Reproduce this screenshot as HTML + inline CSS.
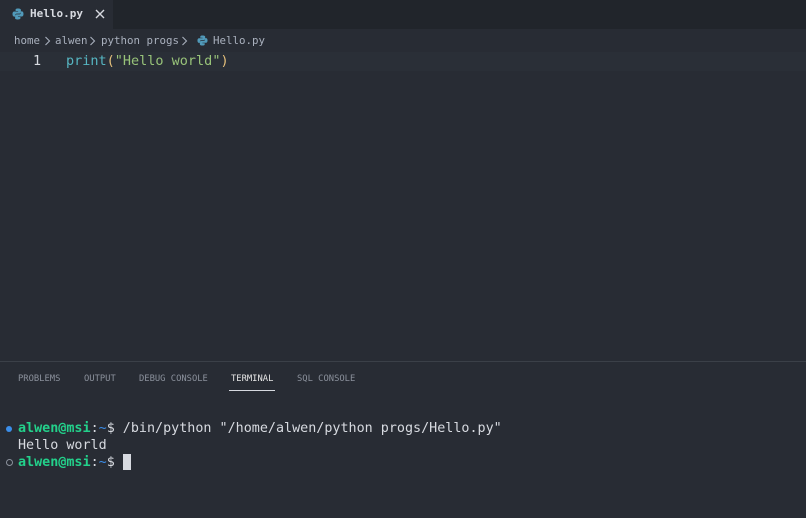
<!DOCTYPE html>
<html><head><style>
body{margin:0;width:806px;height:517px;background:#282c34;overflow:hidden;font-family:"DejaVu Sans Mono","Liberation Mono",monospace;position:relative}
.tabbar{position:absolute;left:0;top:0;width:806px;height:29px;background:#21252b}
.tab{position:absolute;left:0;top:0;width:113px;height:29px;background:#282c34;color:#d7dae0;font-size:11px}
.abs{position:absolute;white-space:pre}
.bc{font-size:10.8px;color:#a9b0bd;top:34px}
.panel{position:absolute;left:0;top:361px;width:806px;height:156px;border-top:1px solid #3b4048;background:#282c34}
.pt{font-size:8.8px;color:#8b919c;top:374px}
.term{font-size:13.4px;color:#d7dae0}
.g{color:#23d18b;font-weight:bold}
.b{color:#3b8eea}
</style></head><body>
<div class="tabbar"></div>
<div class="tab">
<svg class="abs" style="left:12px;top:8px" width="12" height="12" viewBox="0 0 12 12"><path d="M6 0.5C3.5 0.5 3.6 1.6 3.6 1.6V3H6.1V3.5H2.4S0.5 3.3 0.5 6s1.7 2.6 1.7 2.6H3.2V7.3S3.1 5.6 4.8 5.6H7.3S8.9 5.6 8.9 4V1.9S9.2 0.5 6 0.5Z" fill="#519aba"/><path d="M6 11.5c2.5 0 2.4-1.1 2.4-1.1V9H5.9V8.5h3.7S11.5 8.7 11.5 6s-1.7-2.6-1.7-2.6H8.8v1.3S8.9 6.4 7.2 6.4H4.7S3.1 6.4 3.1 8v2.1S2.8 11.5 6 11.5Z" fill="#519aba"/></svg>
<span class="abs" style="left:30px;top:7px;font-weight:bold">Hello.py</span>
<svg class="abs" style="left:95px;top:9px" width="10" height="10" viewBox="0 0 10 10"><path d="M1 1L9 9M9 1L1 9" stroke="#d7dae0" stroke-width="1.4"/></svg>
</div>
<span class="abs bc" style="left:14px">home</span>
<svg class="abs" style="left:44px;top:36px" width="7" height="10" viewBox="0 0 7 10"><path d="M1.5 1L5.5 5L1.5 9" stroke="#a9b0bd" stroke-width="1.1" fill="none"/></svg>
<span class="abs bc" style="left:55px">alwen</span>
<svg class="abs" style="left:89px;top:36px" width="7" height="10" viewBox="0 0 7 10"><path d="M1.5 1L5.5 5L1.5 9" stroke="#a9b0bd" stroke-width="1.1" fill="none"/></svg>
<span class="abs bc" style="left:101px">python progs</span>
<svg class="abs" style="left:181px;top:36px" width="7" height="10" viewBox="0 0 7 10"><path d="M1.5 1L5.5 5L1.5 9" stroke="#a9b0bd" stroke-width="1.1" fill="none"/></svg>
<span class="abs bc" style="left:213px">Hello.py</span>
<svg class="abs" style="left:197px;top:35px" width="11" height="11" viewBox="0 0 12 12"><path d="M6 0.5C3.5 0.5 3.6 1.6 3.6 1.6V3H6.1V3.5H2.4S0.5 3.3 0.5 6s1.7 2.6 1.7 2.6H3.2V7.3S3.1 5.6 4.8 5.6H7.3S8.9 5.6 8.9 4V1.9S9.2 0.5 6 0.5Z" fill="#519aba"/><path d="M6 11.5c2.5 0 2.4-1.1 2.4-1.1V9H5.9V8.5h3.7S11.5 8.7 11.5 6s-1.7-2.6-1.7-2.6H8.8v1.3S8.9 6.4 7.2 6.4H4.7S3.1 6.4 3.1 8v2.1S2.8 11.5 6 11.5Z" fill="#519aba"/></svg>
<div class="abs" style="left:0;top:52px;width:806px;height:19px;background:#2a2f37"></div>
<span class="abs" style="left:33px;top:53px;font-size:13.5px;color:#d7dae0">1</span>
<span class="abs" style="left:66px;top:53px;font-size:13.5px"><span style="color:#56b6c2">print</span><span style="color:#e5c07b">(</span><span style="color:#98c379">"Hello world"</span><span style="color:#e5c07b">)</span></span>
<div class="panel"></div>
<span class="abs pt" style="left:18px">PROBLEMS</span>
<span class="abs pt" style="left:84px">OUTPUT</span>
<span class="abs pt" style="left:139px">DEBUG CONSOLE</span>
<span class="abs pt" style="left:231px;color:#e6e6e6">TERMINAL</span>
<div class="abs" style="left:229px;top:390px;width:46px;height:1px;background:#d7dae0"></div>
<span class="abs pt" style="left:297px">SQL CONSOLE</span>
<div class="abs" style="left:6px;top:426px;width:6px;height:6px;border-radius:50%;background:#3b8eea"></div>
<div class="abs" style="left:6px;top:459px;width:5px;height:5px;border-radius:50%;border:1px solid #8b919c"></div>
<span class="abs term" style="left:18px;top:421px"><span class="g">alwen@msi</span>:<span class="b">~</span>$ /bin/python "/home/alwen/python progs/Hello.py"</span>
<span class="abs term" style="left:18px;top:438px">Hello world</span>
<span class="abs term" style="left:18px;top:455px"><span class="g">alwen@msi</span>:<span class="b">~</span>$ </span>
<div class="abs" style="left:123px;top:454px;width:8px;height:16px;background:#d7dae0"></div>
</body></html>
